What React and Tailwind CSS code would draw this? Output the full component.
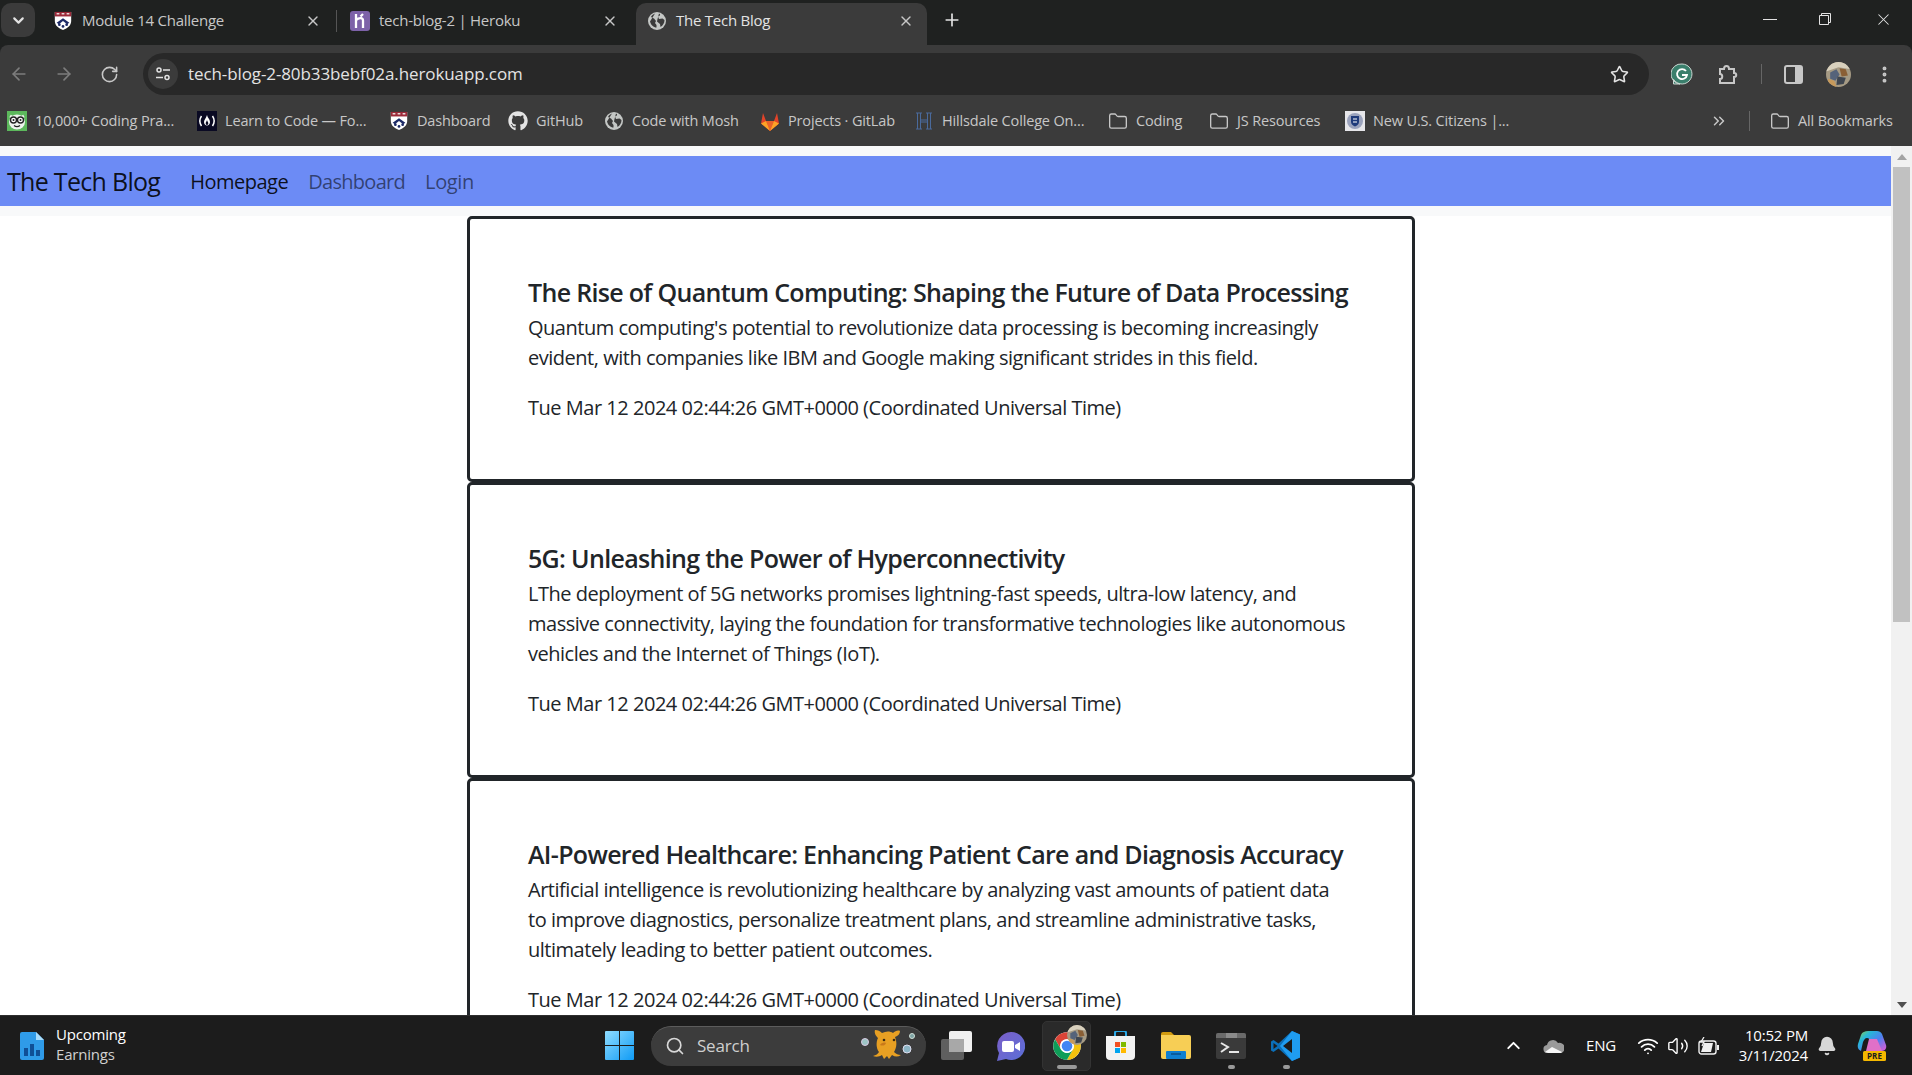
import { ArrowLeft, ArrowRight, Bell, ChevronDown, ChevronUp, ChevronsRight, EllipsisVertical, Folder, Plus, RotateCw, Search, Star, Volume2, Wifi, X } from 'lucide-react';
import { FaGithub } from 'react-icons/fa';

const posts = [
  {
    title: 'The Rise of Quantum Computing: Shaping the Future of Data Processing',
    body: "Quantum computing's potential to revolutionize data processing is becoming increasingly evident, with companies like IBM and Google making significant strides in this field.",
  },
  {
    title: '5G: Unleashing the Power of Hyperconnectivity',
    body: 'LThe deployment of 5G networks promises lightning-fast speeds, ultra-low latency, and massive connectivity, laying the foundation for transformative technologies like autonomous vehicles and the Internet of Things (IoT).',
  },
  {
    title: 'AI-Powered Healthcare: Enhancing Patient Care and Diagnosis Accuracy',
    body: 'Artificial intelligence is revolutionizing healthcare by analyzing vast amounts of patient data to improve diagnostics, personalize treatment plans, and streamline administrative tasks, ultimately leading to better patient outcomes.',
  },
];

const DATE = 'Tue Mar 12 2024 02:44:26 GMT+0000 (Coordinated Universal Time)';

function PennShield({ size = 20 }) {
  return (
    <svg width={size} height={size} viewBox="0 0 20 22">
      <path d="M1 1h18v10c0 5-4 8-9 10C5 19 1 16 1 11z" fill="#fff" />
      <path d="M1 1h18v5H1z" fill="#9c2a3a" />
      <path d="M3 3h3M8.5 3h3M14 3h3" stroke="#e8d8d8" strokeWidth="1.6" />
      <path d="M3 13l7-5 7 5-2.500 1.500L10 11l-4.500 3.500z" fill="#1c2a66" />
      <circle cx="6" cy="15" r="1.500" fill="#1c2a66" />
      <circle cx="14" cy="15" r="1.500" fill="#1c2a66" />
      <circle cx="10" cy="17" r="1.500" fill="#1c2a66" />
    </svg>
  );
}

function HerokuIcon() {
  return (
    <svg width="20" height="20" viewBox="0 0 20 20">
      <rect width="20" height="20" rx="3" fill="#7d62a8" />
      <path d="M6 3v14M6 9c3-2.500 7-2.500 7 .5V17M13 3l-2.500 2.500" stroke="#fff" strokeWidth="2.300" fill="none" />
    </svg>
  );
}

function GlobeIcon({ size = 20 }) {
  return (
    <svg width={size} height={size} viewBox="0 0 20 20">
      <circle cx="10" cy="10" r="9" fill="#c4c7c5" />
      <path d="M8 2.500C6 3.500 4.500 4.500 4 6l3 1.500 2 2.500-1 2 1.500 2v2.500c-3 0-5.500-2.500-6.500-6M12 2.500c2 1 1 2.500-1 3L12 8l3.500-.5 2 1.500c0 3-1.500 5.500-4 7l-.5-3-3-2.500.5-2.500" fill="#3b3b3b" />
    </svg>
  );
}

function NerdIcon() {
  return (
    <svg width="20" height="20" viewBox="0 0 20 20">
      <rect width="20" height="20" fill="#5cb85c" />
      <ellipse cx="10" cy="11" rx="8" ry="7.500" fill="#eef3ee" />
      <path d="M3 5l4 2M17 5l-4 2" stroke="#eef3ee" strokeWidth="3" />
      <circle cx="6.500" cy="9" r="3" fill="#fff" stroke="#222" strokeWidth="1.400" />
      <circle cx="13.500" cy="9" r="3" fill="#fff" stroke="#222" strokeWidth="1.400" />
      <circle cx="6.500" cy="9" r="1" fill="#222" />
      <circle cx="13.500" cy="9" r="1" fill="#222" />
      <path d="M7 14.500c2 1.500 4 1.500 6 0" stroke="#222" strokeWidth="1.300" fill="none" />
    </svg>
  );
}

function FccIcon() {
  return (
    <svg width="20" height="20" viewBox="0 0 20 20">
      <rect width="20" height="20" fill="#0a0a23" />
      <path d="M4.500 5C2.500 8 2.500 12 4.500 15M15.500 5c2 3 2 7 0 10" stroke="#fff" strokeWidth="1.500" fill="none" />
      <path d="M10 4c.5 3 3 4 3 7 0 2-1.500 3.500-3 3.500S7 13 7 11c0-2 2-3.500 3-7z" fill="#fff" />
      <path d="M10 9c.3 1.500 1.300 2 1.300 3.200S10.500 14 10 14s-1.300-.7-1.300-1.800S9.700 10.500 10 9z" fill="#0a0a23" />
    </svg>
  );
}

function GitlabIcon() {
  return (
    <svg width="20" height="22" viewBox="0 0 20 22">
      <path d="M10 21L1 13.500 3 3l3 8h8l3-8 2 10.500z" fill="#e24329" />
      <path d="M10 21L6 11h8z" fill="#e8622a" />
      <path d="M1 13.500L6 11l4 10zM19 13.500L14 11l-4 10z" fill="#fca326" />
    </svg>
  );
}

function HillsdaleIcon() {
  return (
    <svg width="20" height="20" viewBox="0 0 20 20" fill="none" stroke="#4a6a9c" strokeWidth="1">
      <path d="M2 2h6M12 2h6M2 18h6M12 18h6M3.500 2v16M6.500 2v16M13.500 2v16M16.500 2v16M6.500 9h7M6.500 11h7" />
    </svg>
  );
}

function DhsIcon() {
  return (
    <svg width="20" height="20" viewBox="0 0 20 20">
      <rect width="20" height="20" fill="#e6e6ea" />
      <circle cx="10" cy="10" r="8" fill="#9aa2bc" />
      <path d="M6 5h8v6c0 2-2 3.500-4 4.500C8 14.500 6 13 6 11z" fill="#1f3a7a" />
      <path d="M8 8h4M8 11h4" stroke="#fff" strokeWidth="1.200" />
    </svg>
  );
}

function Avatar({ size = 25 }) {
  return (
    <svg width={size} height={size} viewBox="0 0 24 24">
      <defs>
        <clipPath id={`av${size}`}>
          <circle cx="12" cy="12" r="12" />
        </clipPath>
      </defs>
      <g clipPath={`url(#av${size})`}>
        <rect width="24" height="24" fill="#a59a84" />
        <path d="M0 0h24v7L12 5 0 9z" fill="#d8d0bd" />
        <path d="M4 10l6-3 3 5-4 6-5-2z" fill="#55637a" />
        <path d="M13 6l6 1 2 6-6 1z" fill="#8a5f35" />
        <path d="M11 14l8 1-2 6-7 1z" fill="#3f4650" />
        <path d="M2 16l6 2 2 6H2z" fill="#c79a5c" />
      </g>
    </svg>
  );
}

function Tab({ icon, label, active, width, text, closeClass }) {
  return (
    <div className={active ? 'flex items-center h-[42px] self-end pb-[7px] pl-[11px] rounded-t-[10px] bg-[#3b3b3b]' : 'flex items-center h-[42px] self-end pb-[7px] pl-[13px]'} style={{ width }}>
      <span className="flex w-[20px] justify-center shrink-0">{icon}</span>
      <span className={`ml-[9px] flex-1 text-[15px] tracking-[-0.25px] ${text}`}>{label}</span>
      <X size={16} strokeWidth={2} className={`text-[#c7c7c7] shrink-0 ${closeClass}`} />
    </div>
  );
}

function Bookmark({ icon, label, width }) {
  return (
    <div className="flex items-center shrink-0" style={{ width }}>
      <span className="flex w-[20px] justify-center shrink-0">{icon}</span>
      <span className="ml-[8px] text-[14.5px] text-[#c7c7c7] tracking-[-0.15px] whitespace-nowrap">{label}</span>
    </div>
  );
}

function ChromeBar() {
  return (
    <div className="shrink-0 h-[146px] bg-[#1f2120]">
      <div className="flex h-[45px] items-start">
        <div className="flex ml-[1px] mt-[3px] w-[34px] h-[34px] items-center justify-center rounded-[10px] bg-[#3b3b3b]">
          <ChevronDown size={17} strokeWidth={3} className="text-[#e3e3e3]" />
        </div>
        <div className="flex h-full ml-[5px]">
          <Tab icon={<PennShield />} label="Module 14 Challenge" width={296} text="text-[#c7c7c7]" closeClass="mr-[15px]" />
          <div className="w-[1px] h-[22px] mt-[10px] bg-[#555]" />
          <Tab icon={<HerokuIcon />} label="tech-blog-2 | Heroku" width={299} text="text-[#c7c7c7]" closeClass="mr-[18px]" />
          <Tab icon={<GlobeIcon />} label="The Tech Blog" width={291} active text="text-[#e3e3e3]" closeClass="mr-[13px]" />
        </div>
        <Plus size={20} strokeWidth={2} className="ml-[15px] mt-[10px] text-[#e3e3e3]" />
        <div className="ml-auto flex items-center h-[38px] text-[#e3e3e3]">
          <div className="w-[14px] h-[1px] bg-[#e3e3e3] mr-[41px]" />
          <svg width="14" height="14" viewBox="0 0 14 14" fill="none" stroke="#e3e3e3" className="mr-[42px]">
            <path d="M1.500 3.500h9v9h-9zM3.500 3.500v-2h9v9h-2" />
          </svg>
          <X size={19} strokeWidth={1.300} className="mr-[19px]" />
        </div>
      </div>
      <div className="h-[101px] bg-[#3b3b3b] rounded-t-[8px]">
        <div className="flex items-center h-[55px] pt-[3px]">
          <div className="flex w-[38px] justify-center"><ArrowLeft size={20} className="text-[#7d7d7d]" /></div>
          <div className="flex w-[52px] justify-center"><ArrowRight size={20} className="text-[#7d7d7d]" /></div>
          <div className="flex w-[38px] justify-center"><RotateCw size={19} className="text-[#c7c7c7]" /></div>
          <div className="flex items-center ml-[15px] w-[1506px] h-[42px] rounded-full bg-[#282828]">
            <div className="flex ml-[5px] w-[30px] h-[30px] items-center justify-center rounded-full bg-[#3b3b3b]">
              <svg width="16" height="16" viewBox="0 0 16 16" fill="none" stroke="#e3e3e3" strokeWidth="1.500">
                <circle cx="4" cy="4" r="2" />
                <path d="M8 4h7M1 11.500h7" />
                <circle cx="12" cy="11.500" r="2" />
              </svg>
            </div>
            <span className="ml-[10px] text-[17px] text-[#e3e3e3] tracking-[-0.1px]">tech-blog-2-80b33bebf02a.herokuapp.com</span>
            <Star size={19} strokeWidth={2} className="ml-auto mr-[20px] text-[#e3e3e3]" />
          </div>
          <div className="flex w-[44px] justify-end">
            <svg width="22" height="22" viewBox="0 0 22 22">
              <path d="M11 1a10 10 0 1 1-8.500 15.300V21H9a10 10 0 0 1 2-20z" fill="#3a7f6c" stroke="#c9d6d1" strokeWidth="1" />
              <path d="M15 8a5 5 0 1 0 1 4h-5" fill="none" stroke="#fff" strokeWidth="1.800" />
            </svg>
          </div>
          <div className="flex w-[46px] justify-end">
            <svg width="21" height="21" viewBox="0 0 21 21" fill="none" stroke="#c7c7c7" strokeWidth="2">
              <path d="M2 5h4c0-4 5-4 5 0h5v4c3 0 3 4 0 4v6H2v-4c3 0 3-5 0-5z" />
            </svg>
          </div>
          <div className="w-[1px] h-[20px] ml-[22px] bg-[#666]" />
          <div className="flex w-[41px] justify-end">
            <svg width="19" height="19" viewBox="0 0 19 19">
              <rect x="1" y="1" width="17" height="17" rx="2" fill="none" stroke="#c7c7c7" strokeWidth="2" />
              <rect x="11" y="1" width="7" height="17" fill="#c7c7c7" />
            </svg>
          </div>
          <div className="flex ml-[23px]"><Avatar /></div>
          <EllipsisVertical size={21} strokeWidth={2.500} className="ml-[23px] text-[#c7c7c7]" />
        </div>
        <div className="flex items-center h-[42px] pl-[7px]">
          <Bookmark icon={<NerdIcon />} label="10,000+ Coding Pra..." width={190} />
          <Bookmark icon={<FccIcon />} label="Learn to Code — Fo..." width={192} />
          <Bookmark icon={<PennShield />} label="Dashboard" width={119} />
          <Bookmark icon={<FaGithub size={20} className="text-[#e3e3e3]" />} label="GitHub" width={96} />
          <Bookmark icon={<GlobeIcon />} label="Code with Mosh" width={156} />
          <Bookmark icon={<GitlabIcon />} label="Projects · GitLab" width={154} />
          <Bookmark icon={<HillsdaleIcon />} label="Hillsdale College On..." width={194} />
          <Bookmark icon={<Folder size={21} strokeWidth={1.600} className="text-[#c7c7c7]" />} label="Coding" width={101} />
          <Bookmark icon={<Folder size={21} strokeWidth={1.600} className="text-[#c7c7c7]" />} label="JS Resources" width={136} />
          <Bookmark icon={<DhsIcon />} label="New U.S. Citizens |..." width={365} />
          <ChevronsRight size={18} strokeWidth={2} className="text-[#c7c7c7]" />
          <div className="w-[1px] h-[20px] ml-[21px] bg-[#666]" />
          <div className="ml-[20px]">
            <Bookmark icon={<Folder size={21} strokeWidth={1.600} className="text-[#c7c7c7]" />} label="All Bookmarks" width={125} />
          </div>
        </div>
      </div>
    </div>
  );
}

function Navbar() {
  return (
    <nav className="shrink-0 py-[10px] bg-[#f8f9fa]">
      <div className="flex items-center h-[50px] bg-[#6c8bf5] pl-[7px] pt-[2px]">
        <span className="text-[25px] text-black/90 tracking-[-0.7px]">The Tech Blog</span>
        <span className="ml-[30px] text-[20px] text-black/90 tracking-[-0.5px]">Homepage</span>
        <span className="ml-[20px] text-[20px] text-black/55 tracking-[-0.7px]">Dashboard</span>
        <span className="ml-[20px] text-[20px] text-black/55 tracking-[-0.4px]">Login</span>
      </div>
    </nav>
  );
}

function PostCard({ title, body }) {
  return (
    <div className="border-[3px] border-[#212529] rounded-[5px] pl-[58px] pr-[64px] pt-[53px] pb-[56px] text-[#212529] shrink-0">
      <h5 className="text-[25px] leading-[41px] font-[550] tracking-[-0.68px] whitespace-nowrap">{title}</h5>
      <p className="text-[20px] leading-[30px] tracking-[-0.48px] mb-[20px]">{body}</p>
      <p className="text-[20px] leading-[30px] tracking-[-0.48px]">{DATE}</p>
    </div>
  );
}

function Scrollbar() {
  return (
    <div className="flex flex-col items-center w-[21px] shrink-0 bg-[#f1f1f1]">
      <div className="flex h-[21px] w-full items-center justify-center">
        <div className="w-0 h-0 border-x-[5px] border-x-transparent border-b-[6px] border-b-[#a3a3a3]" />
      </div>
      <div className="w-[17px] h-[455px] bg-[#c1c1c1]" />
      <div className="flex mt-auto h-[21px] w-full items-center justify-center">
        <div className="w-0 h-0 border-x-[5px] border-x-transparent border-t-[6px] border-t-[#505050]" />
      </div>
    </div>
  );
}

function Cell({ className, dot, children }) {
  return (
    <div className={`relative flex items-center justify-center h-[50px] shrink-0 ${className}`}>
      {children}
      {dot && <div className="absolute bottom-[2px] w-[7px] h-[4px] rounded-full bg-[#9a9a9a]" />}
    </div>
  );
}

function Taskbar() {
  return (
    <div className="shrink-0 flex items-center h-[60px] bg-[#1c1c1c] border-t border-[#2e2e2e] text-white">
      <div className="flex items-center w-[599px] pl-[20px] shrink-0">
        <svg width="24" height="28" viewBox="0 0 24 28">
          <path d="M2 0h14l8 8v18a2 2 0 0 1-2 2H2a2 2 0 0 1-2-2V2a2 2 0 0 1 2-2z" fill="#2f9be8" />
          <path d="M16 0l8 8h-8z" fill="#a8dcfb" />
          <path d="M4 24v-8h4v8zM10 24V12h4v12zM16 24v-6h4v6z" fill="#0f4f96" />
        </svg>
        <div className="ml-[12px] mb-[4px] text-[15px] leading-[20px] tracking-[-0.2px]">
          <div>Upcoming</div>
          <div className="text-[#d0d0d0]">Earnings</div>
        </div>
      </div>
      <Cell className="w-[40px]">
        <svg width="29" height="29" viewBox="0 0 29 29">
          <defs>
            <linearGradient id="win" x1="0" y1="0" x2="1" y2="1">
              <stop offset="0" stopColor="#8fdcff" />
              <stop offset="1" stopColor="#0f9bf5" />
            </linearGradient>
          </defs>
          <path d="M0 1a1 1 0 0 1 1-1h13v14H0zM15 0h13a1 1 0 0 1 1 1v13H15zM0 15h14v14H1a1 1 0 0 1-1-1zM15 15h14v13a1 1 0 0 1-1 1H15z" fill="url(#win)" />
        </svg>
      </Cell>
      <div className="flex items-center ml-[12px] w-[275px] h-[40px] rounded-full bg-[#3c3c3c] border-t border-[#5c5c5c] shrink-0">
        <Search size={20} strokeWidth={2} className="ml-[14px] text-[#d8d8d8]" />
        <span className="ml-[12px] text-[17px] text-[#cfcfcf] tracking-[-0.2px]">Search</span>
        <svg width="58" height="36" viewBox="0 0 58 36" className="ml-auto mr-[8px]">
          <circle cx="5" cy="14" r="3.500" fill="#9cc4c4" stroke="#d9c8e0" />
          <circle cx="52" cy="8" r="2.500" fill="#7fa5a5" stroke="#cfe0d8" />
          <circle cx="47" cy="21" r="4" fill="#8db5c5" stroke="#dde" />
          <path d="M15 2c3 0 5 1 7 3 4-2 8-2 11 0 2-2 5-3 7-2 0 3-2 5-5 6 2 5 2 10-1 15 2 2 4 3 7 3-3 2-6 2-9 0l-3 4-2-3-3 3-2-4c-3 2-6 2-9 1 3-1 5-2 6-4-3-4-3-10-1-14-2-2-4-5-3-8z" fill="#e8a023" />
          <circle cx="24" cy="12" r="1.300" fill="#3c2a10" />
          <circle cx="34" cy="12" r="1.300" fill="#3c2a10" />
          <path d="M20 17c2 1 5 1 6-2-2-1-5 0-6 2z" fill="#c9781a" />
        </svg>
      </div>
      <Cell className="w-[40px] ml-[10px]">
        <svg width="31" height="29" viewBox="0 0 31 29">
          <rect x="0" y="8" width="23" height="21" rx="2" fill="#5f5f5f" />
          <rect x="8" y="0" width="23" height="21" rx="2" fill="#f0f0f0" />
          <rect x="8" y="8" width="15" height="13" fill="#a8a8a8" />
        </svg>
      </Cell>
      <Cell className="w-[40px] ml-[14px]">
        <svg width="30" height="30" viewBox="0 0 30 30">
          <defs>
            <linearGradient id="chat" x1="0" y1="0" x2="1" y2="1">
              <stop offset="0" stopColor="#7b5fc8" />
              <stop offset="1" stopColor="#5a6fd8" />
            </linearGradient>
          </defs>
          <path d="M16 1a14 14 0 1 1-5 27l-9 2 2-8A14 14 0 0 1 16 1z" fill="url(#chat)" />
          <rect x="7" y="10" width="12" height="11" rx="2" fill="#fff" />
          <path d="M20 14l5-3v9l-5-3z" fill="#fff" />
        </svg>
      </Cell>
      <div className="relative flex items-center justify-center ml-[12px] w-[49px] h-[50px] rounded-[5px] bg-[#2a2a2a] border border-[#333] shrink-0">
        <svg width="30" height="30" viewBox="0 0 48 48">
          <circle cx="24" cy="24" r="22" fill="#fff" />
          <path d="M5 13A22 22 0 0 1 43.050 13H24A11 11 0 0 0 14.500 29.500z" fill="#db4437" />
          <path d="M24 13H43.050A22 22 0 0 1 24 46L33.500 29.500A11 11 0 0 0 24 13z" fill="#f4c20d" />
          <path d="M5 13L14.500 29.500A11 11 0 0 0 33.500 29.500L24 46A22 22 0 0 1 5 13z" fill="#0f9d58" />
          <circle cx="24" cy="24" r="11" fill="#fff" />
          <circle cx="24" cy="24" r="8.500" fill="#4285f4" />
        </svg>
        <div className="absolute top-[3px] right-[3px] flex"><Avatar size={20} /></div>
        <div className="absolute bottom-[1px] w-[20px] h-[4px] rounded-full bg-[#9a9a9a]" />
      </div>
      <Cell className="w-[40px] ml-[9px]">
        <svg width="29" height="29" viewBox="0 0 29 29">
          <path d="M9 5V2a2 2 0 0 1 2-2h7a2 2 0 0 1 2 2v3" fill="none" stroke="#2aa9e8" strokeWidth="2" />
          <path d="M0 5h29v20a4 4 0 0 1-4 4H4a4 4 0 0 1-4-4z" fill="#f2f2f2" />
          <rect x="9" y="11" width="5" height="5" fill="#f25022" />
          <rect x="15" y="11" width="5" height="5" fill="#7fba00" />
          <rect x="9" y="17" width="5" height="5" fill="#00a4ef" />
          <rect x="15" y="17" width="5" height="5" fill="#ffb900" />
        </svg>
      </Cell>
      <Cell className="w-[40px] ml-[16px]">
        <svg width="30" height="27" viewBox="0 0 30 27">
          <path d="M0 2a2 2 0 0 1 2-2h8l3 3h-13z" fill="#d19a10" />
          <path d="M0 3h28a2 2 0 0 1 2 2v20a2 2 0 0 1-2 2H2a2 2 0 0 1-2-2z" fill="#f7ce55" />
          <rect x="5" y="19" width="20" height="8" rx="1" fill="#0f7fd0" />
          <path d="M10 22h10" stroke="#0a4f8a" strokeWidth="1.500" />
        </svg>
      </Cell>
      <Cell className="w-[40px] ml-[15px]" dot>
        <svg width="30" height="26" viewBox="0 0 30 26">
          <rect width="30" height="26" rx="2" fill="#3a3a3a" />
          <path d="M0 2a2 2 0 0 1 2-2h26a2 2 0 0 1 2 2v3H0z" fill="#6a6a6a" />
          <path d="M10 0h11v5H10z" fill="#8a8a8a" />
          <path d="M5 10l7 4-7 5" stroke="#e6e6e6" strokeWidth="2" fill="none" />
          <path d="M13 19h10" stroke="#e6e6e6" strokeWidth="2" />
        </svg>
      </Cell>
      <Cell className="w-[40px] ml-[15px]" dot>
        <svg width="30" height="30" viewBox="0 0 30 30">
          <path d="M21 0l8 3.500v23L21 30 7.500 17.500 2.500 21 0 19.500V10.500L2.500 9l5 3.500z" fill="#0b6fb8" />
          <path d="M21 0l8 3.500v23L21 30 9 15z" fill="#1f9cf0" />
          <path d="M21 8v14l-9-7z" fill="#1c1c1c" />
          <path d="M2.500 12l4 3-4 3z" fill="#1c1c1c" />
        </svg>
      </Cell>
      <div className="flex items-center ml-auto">
        <Cell className="w-[40px]"><ChevronUp size={21} strokeWidth={2.200} /></Cell>
        <Cell className="w-[40px]">
          <svg width="21" height="15" viewBox="0 0 21 15">
            <path d="M5 15a4 4 0 0 1-1-8 6 6 0 0 1 11-2 5 5 0 0 1 3 10z" fill="#9a9a9a" />
            <path d="M2 14l7-5 10 5-1 1H5z" fill="#f5f5f5" />
          </svg>
        </Cell>
        <Cell className="w-[40px] ml-[8px]"><span className="text-[15px] tracking-[-0.2px]">ENG</span></Cell>
        <Cell className="w-[30px] ml-[12px]"><Wifi size={22} strokeWidth={2} /></Cell>
        <Cell className="w-[30px]"><Volume2 size={22} strokeWidth={1.500} /></Cell>
        <Cell className="w-[30px]">
          <svg width="21" height="18" viewBox="0 0 21 18">
            <rect x="1" y="4" width="17" height="13" rx="2.500" fill="none" stroke="#f0f0f0" strokeWidth="1.400" />
            <path d="M6 6h9l-2 9H3z" fill="#f0f0f0" />
            <path d="M19 8h2v5h-2z" fill="#f0f0f0" />
            <path d="M6 0L3 5h3l-2 4" stroke="#f0f0f0" strokeWidth="1.300" fill="none" />
          </svg>
        </Cell>
        <div className="w-[85px] mb-[2px] text-right text-[15px] leading-[20px] tracking-[-0.2px] shrink-0">
          <div>10:52 PM</div>
          <div>3/11/2024</div>
        </div>
        <Cell className="w-[30px] ml-[4px]"><Bell size={20} fill="#d8d8d8" className="text-[#d8d8d8]" /></Cell>
        <Cell className="w-[40px] ml-[10px]">
          <svg width="30" height="30" viewBox="0 0 30 30">
            <defs>
              <linearGradient id="cop" x1="0" y1="0" x2="1" y2="0.800">
                <stop offset="0" stopColor="#9ccc40" />
                <stop offset="0.300" stopColor="#26b8d8" />
                <stop offset="0.650" stopColor="#4f7ff0" />
                <stop offset="1" stopColor="#c860d8" />
              </linearGradient>
            </defs>
            <path d="M11 0h9c2 0 4 1 5 3l4 11c1 3-1 6-4 6H17l-3-9c-1-2-2-4-4-4-2 0-3 2-4 4l-2 9c-2-1-4-3-3-7l3-9c1-3 4-4 7-4z" fill="url(#cop)" />
            <path d="M12 8h8l5 12H9z" fill="#e070c8" />
            <rect x="6" y="20" width="23" height="10" rx="1.500" fill="#f5b800" />
            <text x="17.500" y="28" textAnchor="middle" fontSize="8" fontWeight="700" fill="#1c1c1c">PRE</text>
          </svg>
        </Cell>
        <div className="w-[20px] shrink-0" />
      </div>
    </div>
  );
}

export default function App() {
  return (
    <div className="flex flex-col w-full h-screen overflow-hidden bg-white font-['Open_Sans',sans-serif]">
      <ChromeBar />
      <div className="flex flex-1 min-h-0">
        <main className="flex flex-col flex-1 min-w-0 overflow-hidden">
          <Navbar />
          <div className="flex flex-col ml-[467px] w-[948px]">
            {posts.map((p) => (
              <PostCard key={p.title} title={p.title} body={p.body} />
            ))}
          </div>
        </main>
        <Scrollbar />
      </div>
      <Taskbar />
    </div>
  );
}
